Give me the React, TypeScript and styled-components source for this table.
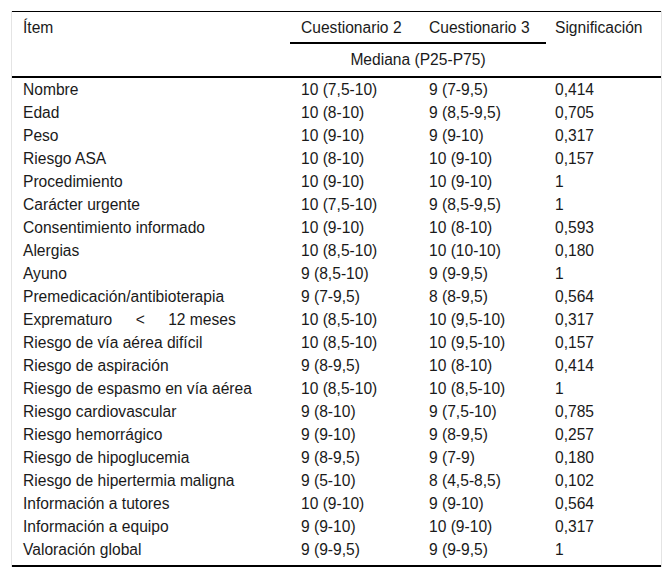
import React from "react";
import styled, { createGlobalStyle } from "styled-components";

const Global = createGlobalStyle`
  html, body { margin: 0; padding: 0; background: #fff; }
  body { font-family: "Liberation Sans", Arial, sans-serif; color: #1a1a1a; }
`;

const Frame = styled.div`
  margin: 11px 0 0 11px;
  width: 651px;
  box-sizing: border-box;
  border-left: 1px solid #e4e4e4;
  border-right: 1px solid #e4e4e4;
`;

const Table = styled.table`
  width: 100%;
  border-collapse: separate;
  border-spacing: 0;
  table-layout: fixed;
  font-size: 15.6px;
  border-top: 1px solid #000;
  border-bottom: 2px solid #000;
`;

const Col = styled.col<{ $w: number }>`
  width: ${(p) => p.$w}px;
`;

const Th = styled.th<{ $pad?: number; $underline?: boolean; $rule?: boolean }>`
  font-weight: normal;
  text-align: left;
  vertical-align: top;
  box-sizing: border-box;
  padding: 7px 0 0 ${(p) => p.$pad ?? 11}px;
  height: 32px;
  line-height: 18px;
  white-space: nowrap;
  border-bottom: ${(p) => (p.$underline || p.$rule ? "2px solid #000" : "none")};
`;

const SubTh = styled.th`
  font-weight: normal;
  text-align: center;
  box-sizing: border-box;
  height: 34px;
  padding: 0 0 1px;
  line-height: 18px;
  vertical-align: middle;
  border-bottom: 2px solid #000;
`;

const Td = styled.td<{ $pad?: number; $last?: boolean }>`
  padding: 0 0 ${(p) => (p.$last ? 4 : 0)}px ${(p) => p.$pad ?? 11}px;
  height: 23px;
  line-height: 23px;
  white-space: nowrap;
`;

const rows: [string, string, string, string][] = [
  ["Nombre", "10 (7,5-10)", "9 (7-9,5)", "0,414"],
  ["Edad", "10 (8-10)", "9 (8,5-9,5)", "0,705"],
  ["Peso", "10 (9-10)", "9 (9-10)", "0,317"],
  ["Riesgo ASA", "10 (8-10)", "10 (9-10)", "0,157"],
  ["Procedimiento", "10 (9-10)", "10 (9-10)", "1"],
  ["Carácter urgente", "10 (7,5-10)", "9 (8,5-9,5)", "1"],
  ["Consentimiento informado", "10 (9-10)", "10 (8-10)", "0,593"],
  ["Alergias", "10 (8,5-10)", "10 (10-10)", "0,180"],
  ["Ayuno", "9 (8,5-10)", "9 (9-9,5)", "1"],
  ["Premedicación/antibioterapia", "9 (7-9,5)", "8 (8-9,5)", "0,564"],
  ["Exprematuro\u2003\u2002<\u2003\u200212 meses", "10 (8,5-10)", "10 (9,5-10)", "0,317"],
  ["Riesgo de vía aérea difícil", "10 (8,5-10)", "10 (9,5-10)", "0,157"],
  ["Riesgo de aspiración", "9 (8-9,5)", "10 (8-10)", "0,414"],
  ["Riesgo de espasmo en vía aérea", "10 (8,5-10)", "10 (8,5-10)", "1"],
  ["Riesgo cardiovascular", "9 (8-10)", "9 (7,5-10)", "0,785"],
  ["Riesgo hemorrágico", "9 (9-10)", "9 (8-9,5)", "0,257"],
  ["Riesgo de hipoglucemia", "9 (8-9,5)", "9 (7-9)", "0,180"],
  ["Riesgo de hipertermia maligna", "9 (5-10)", "8 (4,5-8,5)", "0,102"],
  ["Información a tutores", "10 (9-10)", "9 (9-10)", "0,564"],
  ["Información a equipo", "9 (9-10)", "10 (9-10)", "0,317"],
  ["Valoración global", "9 (9-9,5)", "9 (9-9,5)", "1"],
];

export default function App() {
  return (
    <>
      <Global />
      <Frame>
        <Table>
          <colgroup>
            <Col $w={278} />
            <Col $w={128} />
            <Col $w={128} />
            <Col $w={115} />
          </colgroup>
          <thead>
            <tr>
              <Th rowSpan={2} $rule>Ítem</Th>
              <Th $underline>Cuestionario 2</Th>
              <Th $underline>Cuestionario 3</Th>
              <Th rowSpan={2} $pad={9} $rule>Significación</Th>
            </tr>
            <tr>
              <SubTh colSpan={2}>Mediana (P25-P75)</SubTh>
            </tr>
          </thead>
          <tbody>
            {rows.map((r, i) => {
              const last = i === rows.length - 1;
              return (
                <tr key={i}>
                  <Td $last={last}>{r[0]}</Td>
                  <Td $last={last}>{r[1]}</Td>
                  <Td $last={last}>{r[2]}</Td>
                  <Td $last={last} $pad={9}>{r[3]}</Td>
                </tr>
              );
            })}
          </tbody>
        </Table>
      </Frame>
    </>
  );
}
